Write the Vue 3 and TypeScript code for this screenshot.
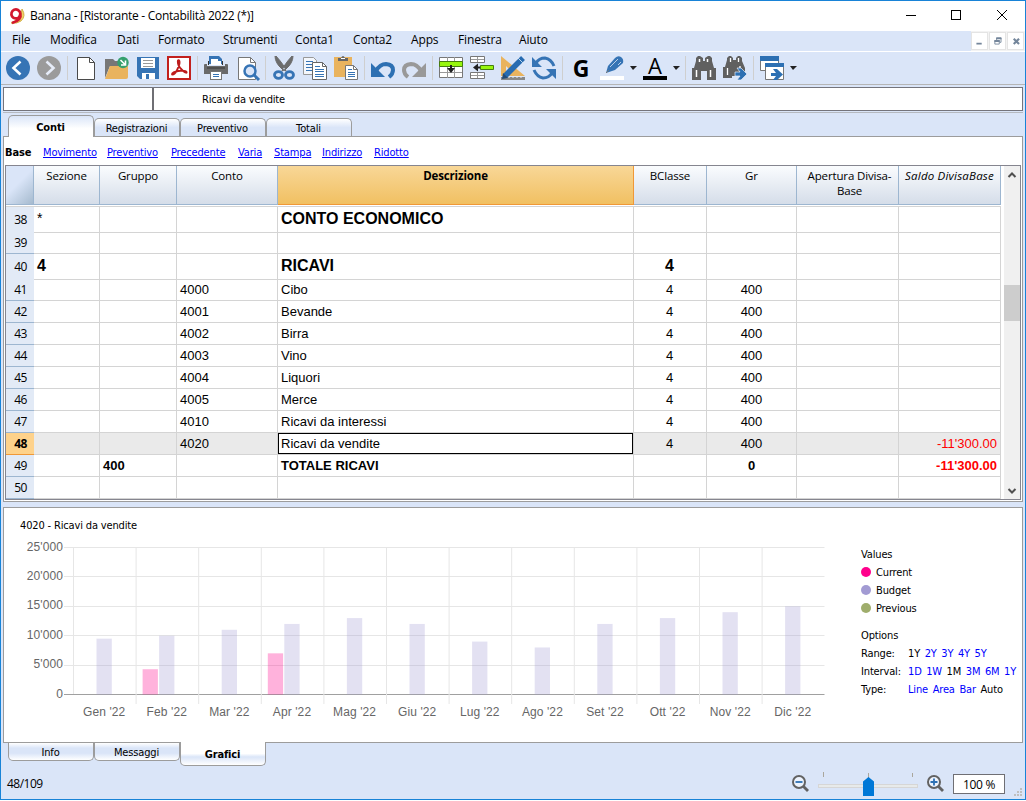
<script setup lang="ts">
interface MenuItem { label: string; width: number }
const menus: MenuItem[] = [
  { label: 'File', width: 38 },
  { label: 'Modifica', width: 67 },
  { label: 'Dati', width: 41 },
  { label: 'Formato', width: 65 },
  { label: 'Strumenti', width: 72 },
  { label: 'Conta1', width: 58 },
  { label: 'Conta2', width: 58 },
  { label: 'Apps', width: 47 },
  { label: 'Finestra', width: 61 },
  { label: 'Aiuto', width: 60 },
]

const tabs = ['Conti', 'Registrazioni', 'Preventivo', 'Totali']
const bottomTabs = ['Info', 'Messaggi', 'Grafici']
const views: MenuItem[] = [
  { label: 'Movimento', width: 64 },
  { label: 'Preventivo', width: 64 },
  { label: 'Precedente', width: 67 },
  { label: 'Varia', width: 36 },
  { label: 'Stampa', width: 48 },
  { label: 'Indirizzo', width: 52 },
  { label: 'Ridotto', width: 40 },
]

const headers = ['Sezione', 'Gruppo', 'Conto', 'Descrizione', 'BClasse', 'Gr', 'Apertura Divisa-Base', 'Saldo DivisaBase']

interface Row {
  n: number
  kind?: 'title' | 'total' | 'selected'
  cells: string[]
}
const account = (n: number, code: string, name: string): Row => ({ n, cells: ['', '', code, name, '4', '400', '', ''] })
const rows: Row[] = [
  { n: 38, kind: 'title', cells: ['*', '', '', 'CONTO ECONOMICO', '', '', '', ''] },
  { n: 39, cells: ['', '', '', '', '', '', '', ''] },
  { n: 40, kind: 'title', cells: ['4', '', '', 'RICAVI', '4', '', '', ''] },
  account(41, '4000', 'Cibo'),
  account(42, '4001', 'Bevande'),
  account(43, '4002', 'Birra'),
  account(44, '4003', 'Vino'),
  account(45, '4004', 'Liquori'),
  account(46, '4005', 'Merce'),
  account(47, '4010', 'Ricavi da interessi'),
  { n: 48, kind: 'selected', cells: ['', '', '4020', 'Ricavi da vendite', '4', '400', '', "-11'300.00"] },
  { n: 49, kind: 'total', cells: ['', '400', '', 'TOTALE RICAVI', '', '0', '', "-11'300.00"] },
  { n: 50, cells: ['', '', '', '', '', '', '', ''] },
]

interface Month { name: string; budget: number; current?: number }
const months: Month[] = [
  { name: 'Gen', budget: 9500 },
  { name: 'Feb', budget: 10000, current: 4300 },
  { name: 'Mar', budget: 11000 },
  { name: 'Apr', budget: 12000, current: 7000 },
  { name: 'Mag', budget: 13000 },
  { name: 'Giu', budget: 12000 },
  { name: 'Lug', budget: 9000 },
  { name: 'Ago', budget: 8000 },
  { name: 'Set', budget: 12000 },
  { name: 'Ott', budget: 13000 },
  { name: 'Nov', budget: 14000 },
  { name: 'Dic', budget: 15000 },
]
const ticks = ["25'000", "20'000", "15'000", "10'000", "5'000", '0']
const plotLeft = 69.5
const plotTop = 8.5
const plotHeight = 147
const baseline = plotTop + plotHeight
const step = 62.6
const monthX = (i: number): number => plotLeft + i * step
const barH = (v: number): number => (v / 25000) * plotHeight
const tickY = (i: number): number => plotTop + (i * plotHeight) / 5

const legend = [
  { label: 'Current', cls: 'pink' },
  { label: 'Budget', cls: 'violet' },
  { label: 'Previous', cls: 'olive' },
]
const options = [
  { label: 'Range:', items: ['1Y', '2Y', '3Y', '4Y', '5Y'], active: '1Y' },
  { label: 'Interval:', items: ['1D', '1W', '1M', '3M', '6M', '1Y'], active: '1M' },
  { label: 'Type:', items: ['Line', 'Area', 'Bar', 'Auto'], active: 'Auto' },
]
</script>

<template>
  <div class="window">
    <header class="titlebar">
      <svg class="logo" width="17" height="18" viewBox="0 0 17 18">
        <path d="M13 2 Q17.500 9 12 14 Q8 17 2 16 Q9 14 12 8Z" fill="#f0d36a" stroke="#c9a22e" stroke-width=".8" />
        <path d="M11.300 6a4.500 4.500 0 1 0-1.300 4.200q1.300-1.500 1.300-4.200Q13 13 3 16" fill="none" stroke="#d3172e" stroke-width="2.700" />
      </svg>
      <span class="title">Banana - [Ristorante - Contabilità 2022 (*)]</span>
      <svg class="winbtns" width="110" height="12" viewBox="0 0 110 12">
        <path d="M0 5.500h10" stroke="#000" />
        <rect x="45.500" y=".5" width="9" height="9" fill="none" stroke="#000" />
        <path d="M91 0l10 10M101 0l-10 10" stroke="#000" />
      </svg>
    </header>

    <nav class="menubar">
      <span v-for="m in menus" :key="m.label" :style="{ width: m.width + 'px' }">{{ m.label }}</span>
      <div class="mdi">
        <svg width="17" height="18" viewBox="0 0 17 18"><path d="M5 12h6" stroke="#74869b" stroke-width="2" /></svg>
        <svg width="17" height="18" viewBox="0 0 17 18"><path d="M7.500 8V5.500H12.500V10.500H11M5.500 8.500h5v4h-5z" fill="none" stroke="#74869b" /><path d="M7 6h6M5 9h6" stroke="#74869b" stroke-width="2" /></svg>
        <svg width="17" height="18" viewBox="0 0 17 18"><path d="M6.500 6.500l6 6M12.500 6.500l-6 6" stroke="#74869b" stroke-width="2.400" /></svg>
      </div>
    </nav>

    <div class="toolbar">
      <svg viewBox="0 0 24 24"><circle cx="12" cy="12" r="12" fill="#3674b5" /><path d="M14.500 5.500L7.500 12l7 6.500" fill="none" stroke="#fff" stroke-width="2.600" /></svg>
      <svg viewBox="0 0 24 24"><circle cx="12" cy="12" r="12" fill="#9b9b9b" /><path d="M9.500 5.500l7 6.500-7 6.500" fill="none" stroke="#e6ecf8" stroke-width="2.600" /></svg>
      <i />
      <svg viewBox="0 0 24 24"><path d="M3.500 1.500h12l5 5v17h-17z" fill="#fff" stroke="#4a4a4a" /><path d="M15.500 1.500v5h5" fill="none" stroke="#4a4a4a" /></svg>
      <svg viewBox="0 0 24 24"><path d="M0 22V3h8l2 2h9v5H5z" fill="#777" /><path d="M0 23L5 10H23V21q0 2-2 2z" fill="#e9b35e" /><circle cx="18" cy="6.500" r="5.700" fill="#36a06e" /><path d="M15.500 4l5 5M20.500 4.500V9H16" fill="none" stroke="#fff" stroke-width="1.600" /></svg>
      <svg viewBox="0 0 24 24"><path d="M1 1h22v22H4l-3-3z" fill="#3674b5" /><path d="M5 2h14v10H5z" fill="#fff" /><path d="M7 4.500h10M7 7.500h10M7 10.500h10" stroke="#999" /><path d="M6 17h13v6H6z" fill="#fff" /><path d="M10 18h3v5h-3z" fill="#3674b5" /></svg>
      <svg viewBox="0 0 24 24"><rect x="1" y="1" width="22" height="22" fill="#fff" stroke="#c2201d" stroke-width="2" /><path d="M5 18.500C4 15.500 18 13 19.500 16S12 13 11 7.500s2-3.500 1.500 0S8 19.500 5 18.500z" fill="none" stroke="#bd1c1c" stroke-width="1.800" /></svg>
      <i />
      <svg viewBox="0 0 24 24"><path d="M5 0h10l3 3v5H5z" fill="#3674b5" /><path d="M7 3h7v2h3v4H7z" fill="#fff" /><path d="M0 9q0-1 1-1h2v2h18V8h2q1 0 1 1v9H0z" fill="#6a6a6a" /><path d="M3 12h18" stroke="#505050" stroke-width="2" /><path d="M4 5h1v4H4zM18 5h1v4h-1z" fill="#333" /><path d="M6 15h12v9H6z" fill="#777" /><path d="M7 16h10v7H7z" fill="#fff" /><path d="M9 18.500h6M9 20.500h6" stroke="#3674b5" /></svg>
      <svg viewBox="0 0 24 24"><path d="M3.500 1.500h12l5 5v17h-17z" fill="#fff" stroke="#777" /><path d="M15.500 1.500v5h5" fill="none" stroke="#777" /><circle cx="15" cy="15" r="5.500" fill="#dae5f8" stroke="#3674b5" stroke-width="2.500" /><path d="M19 19l5 5" stroke="#3674b5" stroke-width="3" /></svg>
      <i />
      <svg viewBox="0 0 24 24"><path d="M3 0q0 7 7 13l4 2q-1-5-10-15M21 0q0 7-7 13l-4 2q1-5 10-15" fill="#6c6c6c" stroke="#6c6c6c" /><ellipse cx="6.500" cy="19" rx="4" ry="3.300" fill="none" stroke="#3674b5" stroke-width="2.800" /><ellipse cx="17.500" cy="19" rx="4" ry="3.300" fill="none" stroke="#3674b5" stroke-width="2.800" /></svg>
      <svg viewBox="0 0 24 24"><path d="M.5 1.500h10l3 3v14H.5z" fill="#f4f7fc" stroke="#999" /><path d="M3 5.500h7M3 8.500h7M3 11.500h7M3 14.500h7" stroke="#3674b5" /><path d="M9.500 6.500h10l4 4v13h-14z" fill="#fff" stroke="#666" /><path d="M19.500 6.500v4h4" fill="none" stroke="#666" /><path d="M12 10.500h5M12 13.500h9M12 15.500h9M12 18.500h9M12 20.500h9" stroke="#3674b5" /></svg>
      <svg viewBox="0 0 24 24"><path d="M0 1h18v20H0z" fill="#e9b35e" /><path d="M4 5V2h3Q9-2 11 2h3v3z" fill="#666" /><path d="M7 2.500h4" stroke="#fff" /><path d="M11.500 9.500h8l4 4v10h-12z" fill="#fff" stroke="#777" /><path d="M19.500 9.500v4h4" fill="none" stroke="#777" /><path d="M14 13.500h4M14 16.500h7M14 18.500h7M14 20.500h7" stroke="#3674b5" /></svg>
      <i />
      <svg viewBox="0 0 24 24"><path d="M0 7v14h14z" fill="#2d70b3" /><path d="M5 15Q9 8 15 8q7 .5 7 6 0 4-4 7" fill="none" stroke="#2d70b3" stroke-width="4" /></svg>
      <svg viewBox="0 0 24 24"><path d="M24 7v14H10z" fill="#999" /><path d="M19 15Q15 8 9 8q-7 .5-7 6 0 4 4 7" fill="none" stroke="#999" stroke-width="4" /></svg>
      <i />
      <svg viewBox="0 0 24 24"><path d="M.5 1.500h23v20H.5z" fill="#fff" stroke="#777" /><path d="M8.500 1v21M15.500 1v21M1 16.500h22" stroke="#999" /><path d="M.5 5.500h23v5H.5z" fill="#97f60c" stroke="#467d0f" /><path d="M12 9v4" stroke="#222" stroke-width="2" /><path d="M8 12h8l-4 5z" fill="#222" /></svg>
      <svg viewBox="0 0 24 24"><path d="M.5.5h14v6H.5zM.5 16.500h14v6H.5z" fill="#fff" stroke="#777" /><path d="M7.500 1v5M7.500 17v5M1 3.500h13M1 19.500h13" stroke="#999" /><path d="M10.500 9.500h13v4h-13z" fill="#97f60c" stroke="#467d0f" /><path d="M3 11.500l5-4v3h2v2H8v3z" fill="#222" /></svg>
      <svg viewBox="0 0 24 24"><path d="M0 0l24 20H0zM5 10v6h6z" fill="#e9b35e" fill-rule="evenodd" /><path d="M0 22.500h24" stroke="#888" stroke-width="3" /><path d="M4 22v-1.500M8 22v-1.500M12 22v-1.500M16 22v-1.500M20 22v-1.500" stroke="#eee" /><path d="M4 20L22 2" stroke="#276bb1" stroke-width="5.500" /><path d="M17 2l5 5" stroke="#bbd4ec" /><path d="M1 23l1-6 5 5z" fill="#234c79" /></svg>
      <svg viewBox="0 0 24 24"><path d="M4 7Q7 2 13 2q6 1 9 8M20 17q-3 5-9 5-6-1-9-8" fill="none" stroke="#3674b5" stroke-width="3" /><path d="M0 1v10h10zM24 23V13H14z" fill="#3674b5" /></svg>
      <i />
      <svg class="glyph" viewBox="0 0 24 24"><text x="12" y="21" text-anchor="middle">G</text></svg>
      <svg viewBox="0 0 24 24"><path d="M0 20h24v4H0z" fill="#fff" /><path d="M6 17l2-7 7-8q3-3 6-1t2 6l-8 7z" fill="#3674b5" /><path d="M10 11l8-8M18 9l3-3" stroke="#b9cfe8" /><path d="M6 17l3-3" stroke="#777" /></svg>
      <b />
      <svg class="glyph thin" viewBox="0 0 24 24"><path d="M0 20h24v4H0z" fill="#000" /><text x="12" y="18" text-anchor="middle">A</text></svg>
      <b />
      <i />
      <svg viewBox="0 0 24 24"><path d="M4 5V2l2-2h2l3 2v3h2V2l3-2h2l2 2v3l2 7h2v12h-9v-9h-6v9H0V12h2z" fill="#606060" /><path d="M7.500 3v3M15.500 3v3M4.500 14v7M18.500 14v7" stroke="#fff" stroke-width="1.500" /></svg>
      <svg viewBox="0 0 24 24"><path d="M4 4V2l2-2h2l2 2v2h3V2l2-2h2l2 2v3l3 7v5h-9v3H9v2H0V11h2z" fill="#606060" /><path d="M7.500 2v4M15.500 2v4M4.500 12v7M17 10v3" stroke="#fff" stroke-width="1.300" /><path d="M12 16h5l-3-4h4l6 6-6 6h-4l3-4h-5z" fill="#2d70b3" stroke="#e6eefa" stroke-width=".7" /></svg>
      <i />
      <svg viewBox="0 0 24 24"><path d="M.5.5h18v14H.5z" fill="#fff" stroke="#777" /><path d="M0 0h19v5H0z" fill="#2d70b3" /><path d="M5.500 7.500h18v16h-18z" fill="#fff" stroke="#777" /><path d="M5 7h19v4H5z" fill="#2d70b3" /><path d="M11 17h5l-3-4h4l6 5.500-6 5.500h-4l3-4h-5z" fill="#2d70b3" /></svg>
      <b />
    </div>

    <div class="formula"><span class="ref" /><span class="value">Ricavi da vendite</span></div>

    <div class="tabs">
      <span v-for="(t, i) in tabs" :key="t" :class="{ active: i === 0 }">{{ t }}</span>
    </div>

    <section class="pane">
      <div class="views">
        <strong>Base</strong>
        <a v-for="v in views" :key="v.label" :style="{ width: v.width + 'px' }"><u>{{ v.label }}</u></a>
      </div>
      <div class="gridbox">
        <div class="grid">
          <div class="row head">
            <div class="corner" />
            <div v-for="(h, i) in headers" :key="h" :class="'h' + i">{{ h }}</div>
          </div>
          <div v-for="r in rows" :key="r.n" class="row" :class="r.kind">
            <div class="num">{{ r.n }}</div>
            <div v-for="(c, i) in r.cells" :key="i" :class="['c' + i, { star: c === '*' }]">{{ c }}</div>
          </div>
        </div>
        <div class="scroll">
          <svg width="16" height="16" viewBox="0 0 16 16"><path d="M4.500 11L8 7.500l3.500 3.500" fill="none" stroke="#505050" stroke-width="2" /></svg>
          <div class="thumb" />
          <svg width="16" height="16" viewBox="0 0 16 16"><path d="M4.500 6L8 9.500 11.500 6" fill="none" stroke="#505050" stroke-width="2" /></svg>
        </div>
      </div>
    </section>

    <section class="chartpane">
      <div class="chartcol">
        <h2>4020 - Ricavi da vendite</h2>
        <svg width="830" height="190" viewBox="0 0 830 190">
          <g v-for="(t, i) in ticks" :key="t">
            <path :d="`M60 ${Math.floor(tickY(i)) + 0.5}H820.500`" :stroke="i === 5 ? '#a0a0a0' : '#e6e6e6'" />
            <text x="59" :y="tickY(i) + 3" text-anchor="end">{{ t }}</text>
          </g>
          <g v-for="(m, i) in months" :key="m.name">
            <path :d="`M${monthX(i)} 8V${i ? 165 : 155}`" stroke="#e6e6e6" />
            <rect :x="monthX(i) + 23" :y="baseline - barH(m.budget)" width="15.300" :height="barH(m.budget)" fill="#a29bd3" fill-opacity=".3" />
            <rect v-if="m.current" :x="monthX(i) + 6.5" :y="baseline - barH(m.current)" width="15.300" :height="barH(m.current)" fill="#ff008c" fill-opacity=".3" />
            <text :x="monthX(i) + step / 2 - 0.6" y="177" text-anchor="middle">{{ m.name }} '22</text>
          </g>
        </svg>
      </div>
      <aside class="legend">
        <p>Values</p>
        <p v-for="l in legend" :key="l.label" class="item"><em :class="l.cls" />{{ l.label }}</p>
        <p class="options">Options</p>
        <p v-for="o in options" :key="o.label" class="item">
          <label>{{ o.label }}</label>
          <a v-for="x in o.items" :key="x" :class="{ on: x === o.active }">{{ x }}</a>
        </p>
      </aside>
    </section>

    <div class="tabs bottom">
      <span v-for="(t, i) in bottomTabs" :key="t" :class="{ active: i === 2 }">{{ t }}</span>
    </div>

    <footer class="status">
      <span class="count">48/109</span>
      <svg width="20" height="20" viewBox="0 0 20 20"><circle cx="8" cy="8" r="6" fill="#edf3fd" stroke="#626262" stroke-width="2" /><path d="M12 12l5 5" stroke="#626262" stroke-width="2.800" /><path d="M4.500 8h7" stroke="#2d70b3" stroke-width="1.800" /></svg>
      <svg class="slider" width="102" height="28" viewBox="0 0 102 28"><path d="M6.500 2v5M51.500 3v5M95.500 3v4" stroke="#aaa69c" /><rect x="1.500" y="14.500" width="99" height="3" fill="#e7eaea" stroke="#d6d6d6" /><path d="M46 11.500L51.500 7 57 11.500V26H46z" fill="#0078d7" /></svg>
      <svg width="20" height="20" viewBox="0 0 20 20"><circle cx="8" cy="8" r="6" fill="#edf3fd" stroke="#626262" stroke-width="2" /><path d="M12 12l5 5" stroke="#626262" stroke-width="2.800" /><path d="M4.500 8h7M8 4.500v7" stroke="#2d70b3" stroke-width="1.800" /></svg>
      <span class="percent">100 %</span>
      <svg class="grip" width="9" height="9" viewBox="0 0 9 9"><path d="M6 0h2v2H6zM3 3h2v2H3zM6 3h2v2H6zM0 6h2v2H0zM3 6h2v2H3zM6 6h2v2H6z" fill="#bfbfbf" /></svg>
    </footer>
  </div>
</template>

<style>
body { background: #fff; overflow: hidden; }
</style>

<style scoped>
* { box-sizing: border-box; }
.window {
  width: 1026px; height: 800px; border: 1px solid #1883d7; background: #dae5f8;
  display: flex; flex-direction: column;
  font: 11px/14px "DejaVu Sans Condensed", "DejaVu Sans", sans-serif; letter-spacing: -0.15px; color: #000;
}
.titlebar { height: 30px; background: #fff; display: flex; align-items: center; padding: 0 0 1px 8px; font: 12px "Open Sans", "Noto Sans", sans-serif; letter-spacing: -0.28px; }
.title { margin-left: 4px; }
.winbtns { margin-left: auto; margin-right: 9px; }
.menubar { height: 21px; border-bottom: 1px solid #fff; display: flex; align-items: flex-start; padding-left: 11px; font: 12px/18px "Open Sans", "Noto Sans", sans-serif; letter-spacing: -0.15px; white-space: nowrap; }
.mdi { margin-left: auto; display: flex; gap: 1px; align-self: stretch; background: #f3f3f3; padding: 1px 1px 0 0; }
.mdi svg { background: #fff; border: 1px solid #e4e4e4; }
.toolbar { height: 33px; border-bottom: 1px solid #b5b5b5; display: flex; align-items: center; padding: 0 0 1px 5px; }
.toolbar svg { width: 24px; height: 24px; margin-right: 7px; flex: none; overflow: visible; }
.toolbar i { width: 1px; height: 24px; margin: 0 6px 0 -1px; background: #cfcfcf; }
.toolbar b { margin: 0 6px 0 -1px; border: solid transparent; border-width: 4px 4px 0 3px; border-top-color: #222; }
.glyph text { font: bold 23px "Open Sans", sans-serif; letter-spacing: 0; }
.thin text { font-weight: 400; font-size: 22px; }
.formula { height: 24px; margin: 2px 2px 0; background: #fff; border: 1px solid #74747c; display: flex; align-items: center; box-shadow: 0 1px #dae5f8, 0 2px #b5b9c0; flex: none; }
.ref { width: 150px; height: 22px; border-right: 2px solid #6f6f74; }
.value { margin-left: 48px; padding-top: 1px; }
.tabs { display: flex; align-items: flex-end; height: 25px; padding-left: 7px; flex: none; }
.tabs span { width: 86px; height: 18px; padding-right: 1px; border: 1px solid #9c9c9c; border-bottom: 0; border-radius: 5px 5px 0 0; background: linear-gradient(#fff, #dae5f8 50%); text-align: center; line-height: 19px; }
.tabs .active { height: 22px; margin-bottom: -1px; background: linear-gradient(#dae5f8, #fff 60%); font-weight: bold; z-index: 1; line-height: 24px; }
.pane { height: 366px; margin: 0 2px; border: 1px solid #9c9c9c; background: #fff; padding: 0 1px; flex: none; }
.views { height: 28px; display: flex; align-items: center; padding-top: 4px; color: #00f; white-space: nowrap; }
.views strong { width: 38px; color: #000; }
.gridbox { height: 335px; border: 1px solid #85858f; display: flex; justify-content: space-between; }
.grid { width: 995px; }
.row { display: grid; grid-template-columns: 28px 66px 77px 101px 356px 73px 90px 102px 102px; height: 22px; font: 13px/21px "Liberation Sans", Arial, sans-serif; letter-spacing: 0; white-space: nowrap; }
.row > div { border-right: 1px solid #d4d4d4; border-bottom: 1px solid #d4d4d4; padding: 0 3px; }
.row > .num { background: #e2eaf6; border-right: 0; border-bottom-color: #9db6d0; font: 12px/21px "Open Sans", sans-serif; letter-spacing: -0.5px; text-align: center; padding: 0 0 0 1px; }
.row.head { height: 41px; border-bottom: 1px solid #d4d4d4; font: 11.5px/15px "Open Sans", "Noto Sans", sans-serif; letter-spacing: -0.15px; }
.row.head > div { height: 39px; border-color: #9db6d0; text-align: center; background: linear-gradient(#fafcfe, #d5dde9); padding: 2px 1px 0; }
.row.head > .corner { background: linear-gradient(135deg, #dae5f8 45%, #a5bace); }
.row.head > .h3 { background: linear-gradient(#f8d797, #f1c062); border-color: #f09837; font-weight: bold; }
.row.head > .h6 { white-space: normal; padding: 2px 4px 0 8px; }
.row.head > .h7 { font-style: italic; letter-spacing: 0.2px; }
.row > .c4, .row > .c5 { text-align: center; padding-right: 4px; }
.row > .c5 { padding-right: 3px; }
.c7 { text-align: right; color: #f00; }
.title.row { margin: 0; height: 25px; line-height: 24px; font-size: 16px; font-weight: bold; }
.title > .num { line-height: 25px; }
.title > .star { font-size: 14px; font-weight: 400; line-height: 22px; }
.total { font-weight: bold; }
.total .c7 { font-weight: bold; }
.selected > div { background: #eaeaea; }
.selected > .num { background: #fed28b; border-bottom-color: #f09837; font-weight: bold; }
.row.selected > .c3 { background: #fff; box-shadow: inset 0 0 0 1px #000; }
.scroll { width: 16px; background: #f0f0f0; display: flex; flex-direction: column; margin-right: 0; }
.thumb { height: 36px; margin: 103px 0 auto; background: #cdcdcd; }
.chartpane { height: 236px; margin: 5px 2px 0; border: 1px solid #9c9c9c; background: #fff; display: flex; flex: none; }
.chartcol { width: 857px; }
h2 { font: inherit; margin: 11px 0 6px 16px; }
.chartcol svg { display: block; }
.chartcol text { font: 12px "Liberation Sans", Arial, sans-serif; letter-spacing: 0.1px; fill: #666; }
.legend { padding-top: 38px; }
.legend p { margin: 0; height: 18px; line-height: 18px; }
.legend .options { margin-top: 9px; }
.item { display: flex; align-items: center; white-space: nowrap; }
.item em { width: 10px; height: 10px; border-radius: 5px; margin: -2px 5px 0 0; }
.pink { background: #ff008c; }
.violet { background: #a29bd3; }
.olive { background: #9fad6c; }
.item label { width: 47px; }
.item a { color: #00f; margin-right: 4.600px; }
.item .on { color: #000; }
.bottom { align-items: flex-start; height: 23px; }
.bottom span { border: 1px solid #9c9c9c; border-top: 0; border-radius: 0 0 5px 5px; background: linear-gradient(#fff, #dae5f8 30%, #dae5f8 60%, #fff); line-height: 19px; }
.bottom .active { height: 24px; margin: -1px 0 0; background: linear-gradient(#fff 50%, #dae5f8 65%, #fff); line-height: 26px; }
.status { flex: 1; display: flex; align-items: center; padding: 2px 2px 0 6px; font-family: "Open Sans", sans-serif; }
.count { margin-right: auto; font-size: 12px; letter-spacing: -0.5px; }
.slider { margin: 0 7px 0 6px; }
.percent { width: 52px; height: 20px; background: #fff; border: 1px solid #6f6f74; text-align: center; line-height: 19px; margin-left: 7px; font-size: 12px; letter-spacing: -0.3px; }
.grip { margin: 17px 0 0 9px; }
</style>
